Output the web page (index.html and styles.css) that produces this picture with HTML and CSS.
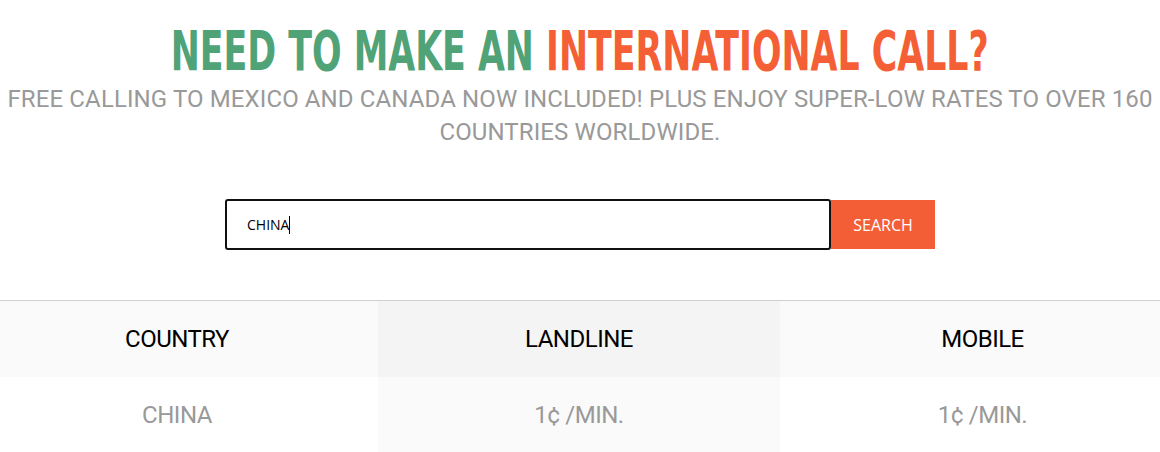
FILE: index.html
```html
<!DOCTYPE html>
<html lang="en">

<head>
    <meta charset="UTF-8">
    <meta name="viewport" content="width=device-width, initial-scale=1.0">
    <link rel="stylesheet" href="styles.css">
    <title>International Calling Rates</title>
</head>

<body>
    <div class="intro">
        <h1 class="title">
            <span class="green">NEED TO MAKE AN</span> <span class="orange">INTERNATIONAL CALL?</span>
        </h1>
        <p class="subtitle">
            FREE CALLING TO MEXICO AND CANADA NOW INCLUDED! PLUS ENJOY SUPER-LOW RATES TO OVER 160 COUNTRIES WORLDWIDE.
        </p>
    </div>

    <form class="search" onsubmit="return false;">
        <div class="search-box">
            <span class="search-value">CHINA</span><span class="caret"></span>
        </div>
        <button class="search-btn" type="submit">SEARCH</button>
    </form>

    <div class="rates">
        <div class="cell head first">COUNTRY</div>
        <div class="cell head mid">LANDLINE</div>
        <div class="cell head last">MOBILE</div>
        <div class="cell body first">CHINA</div>
        <div class="cell body mid">1¢ /MIN.</div>
        <div class="cell body last">1¢ /MIN.</div>
    </div>
</body>

</html>
```

FILE: styles.css
```css
html {
    box-sizing: border-box;
}

*,
*::before,
*::after {
    margin: 0;
    padding: 0;
    box-sizing: inherit;
}

body {
    background-color: #fff;
    font-family: "Roboto", "DejaVu Sans", sans-serif;
}

.intro {
    display: flex;
    flex-direction: column;
    align-items: center;
    text-align: center;
    padding-top: 19px;
}

.title {
    white-space: nowrap;
    font-family: "DejaVu Sans Condensed", "DejaVu Sans", sans-serif;
    font-weight: bold;
    font-size: 56px;
    line-height: 64px;
    transform: scaleX(0.69);
}

.green {
    color: #50a277;
}

.orange {
    color: #f55f35;
}

.subtitle {
    color: #999;
    font-size: 24px;
    line-height: 33px;
    letter-spacing: 0.12px;
    padding: 0 6px;
}

.search {
    display: flex;
    justify-content: center;
    margin-top: 50px;
}

.search-box {
    display: flex;
    align-items: center;
    width: 606px;
    height: 51px;
    border: 2px solid #111;
    border-radius: 3px;
    padding-left: 20px;
    font-family: "Open Sans", sans-serif;
    font-size: 14px;
    color: #000;
}

.caret {
    display: inline-block;
    width: 1px;
    height: 18px;
    background-color: #000;
}

.search-btn {
    width: 104px;
    height: 49px;
    margin-top: 1px;
    border: none;
    background-color: #f45e37;
    color: #fff;
    font-family: "Open Sans", sans-serif;
    font-size: 16px;
}

.rates {
    display: grid;
    grid-template-columns: 378px 402px 1fr;
    margin-top: 50px;
    border-top: 1px solid #cfcfcf;
}

.cell {
    height: 76px;
    display: flex;
    align-items: center;
    justify-content: center;
    font-size: 24px;
    letter-spacing: -0.5px;
}

.first {
    padding-right: 24px;
}

.last {
    padding-left: 25px;
}

.head {
    background-color: #fafafa;
    color: #000;
}

.head.mid {
    background-color: #f4f4f4;
}

.body {
    background-color: #fff;
    color: #999;
}

.body.mid {
    background-color: #fafafa;
}
```
